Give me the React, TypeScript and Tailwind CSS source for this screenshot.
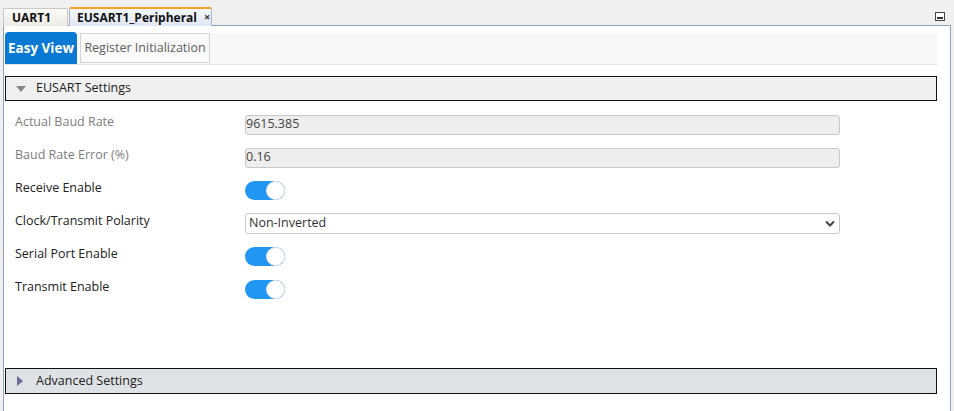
import React from "react";

const font = { fontFamily: '"Open Sans", "Noto Sans", sans-serif' };

function Toggle() {
  return (
    <div className="relative h-[19px] w-[40px] rounded-full bg-[#2196f3]">
      <div className="absolute right-0 top-0 h-[19px] w-[19px] rounded-full border border-[#e4e4e4] bg-white" />
    </div>
  );
}

function Row({ label, disabled, children }: { label: string; disabled?: boolean; children: React.ReactNode }) {
  return (
    <div className="flex h-[33px] items-center">
      <div className={`w-[240px] pl-[10px] text-[12.5px] ${disabled ? "text-[#7d7d7d]" : "text-[#222]"} -mt-[5px]`}>{label}</div>
      <div className="flex flex-1 items-center pr-[97px]">{children}</div>
    </div>
  );
}

export default function App() {
  return (
    <div className="h-[411px] w-[954px] bg-[#f0f0f0] pt-[7px]" style={font}>
      {/* tab bar */}
      <div className="mx-[3px] flex h-[19px] border-b border-[#8fa3b8]">
        <div className="mt-[1px] flex h-[18px] w-[65px] items-center rounded-t-[2px] border border-b-0 border-[#c9c9c9] bg-gradient-to-b from-[#fbfbf8] to-[#eceae4] pl-[8px] text-[12px] font-bold text-[#111]">
          UART1
        </div>
        <div className="ml-[1px] flex h-[19px] w-[143px] items-center rounded-t-[2px] border border-b-0 border-t-2 border-[#a9b8cb] border-t-[#f0a328] bg-gradient-to-b from-[#f4f7fc] to-[#dfe7f4] pl-[7px] text-[12px] font-bold text-[#111]">
          EUSART1_Peripheral
          <span className="ml-[7px] text-[11px] font-bold text-[#333]">×</span>
        </div>
        <div className="flex flex-1 items-center justify-end pr-[6px]">
          <div className="flex h-[9px] w-[10px] items-end justify-center border border-[#444] bg-white pb-[1px]">
            <div className="h-[2px] w-[6px] bg-[#333]" />
          </div>
        </div>
      </div>
      {/* panel */}
      <div className="mx-[3px] h-[385px] border-x border-[#8fa3b8] bg-white pl-[1px] pr-[13px] pt-[7px]">
        <div className="flex h-[32px] items-end gap-[3px] border-b border-[#e2e4e8] bg-[#f7f8fa]">
          <div className="flex h-[32px] w-[72px] items-center justify-center rounded-t-[4px] bg-[#0a79d3] text-[13.5px] font-bold text-white">
            Easy View
          </div>
          <div className="mb-[1px] flex h-[30px] w-[130px] items-center justify-center border border-[#d3d3d3] bg-[#f9f9f9] text-[12.5px] text-[#5f5f5f]">
            Register Initialization
          </div>
        </div>
        <div className="mt-[11px] flex h-[25px] items-center border border-[#111] bg-[#f0f0f0] pl-[10px]">
          <svg width="10" height="6" viewBox="0 0 10 6" className="mt-[1px]">
            <path d="M0 0 L10 0 L5 6 Z" fill="#888" />
          </svg>
          <span className="ml-[10px] text-[12.5px] text-[#222]">EUSART Settings</span>
        </div>
        <div className="pt-[7px]">
          <Row label="Actual Baud Rate" disabled>
            <div className="flex h-[20px] w-full items-center rounded-[3px] border border-[#c8c8c8] bg-[#eeeeee] text-[12.5px] text-[#444]">9615.385</div>
          </Row>
          <Row label="Baud Rate Error (%)" disabled>
            <div className="flex h-[20px] w-full items-center rounded-[3px] border border-[#c8c8c8] bg-[#eeeeee] text-[12.5px] text-[#444]">0.16</div>
          </Row>
          <Row label="Receive Enable">
            <Toggle />
          </Row>
          <Row label="Clock/Transmit Polarity">
            <div className="flex h-[21px] w-full items-center justify-between rounded-[3px] border border-[#c8c8c8] bg-white pl-[3px] pr-[4px] text-[12.5px] text-[#333]">
              <span>Non-Inverted</span>
              <svg width="10" height="7" viewBox="0 0 10 7">
                <path d="M1 1.5 L5 5.5 L9 1.5" fill="none" stroke="#444" strokeWidth="2" />
              </svg>
            </div>
          </Row>
          <Row label="Serial Port Enable">
            <Toggle />
          </Row>
          <Row label="Transmit Enable">
            <Toggle />
          </Row>
        </div>
        <div className="mt-[62px] flex h-[26px] items-center border border-[#111] bg-[#dee1e5] pl-[11px]">
          <svg width="6" height="10" viewBox="0 0 6 10">
            <path d="M0 0 L6 5 L0 10 Z" fill="#6e6e94" />
          </svg>
          <span className="ml-[13px] text-[12.5px] text-[#222]">Advanced Settings</span>
        </div>
      </div>
    </div>
  );
}
